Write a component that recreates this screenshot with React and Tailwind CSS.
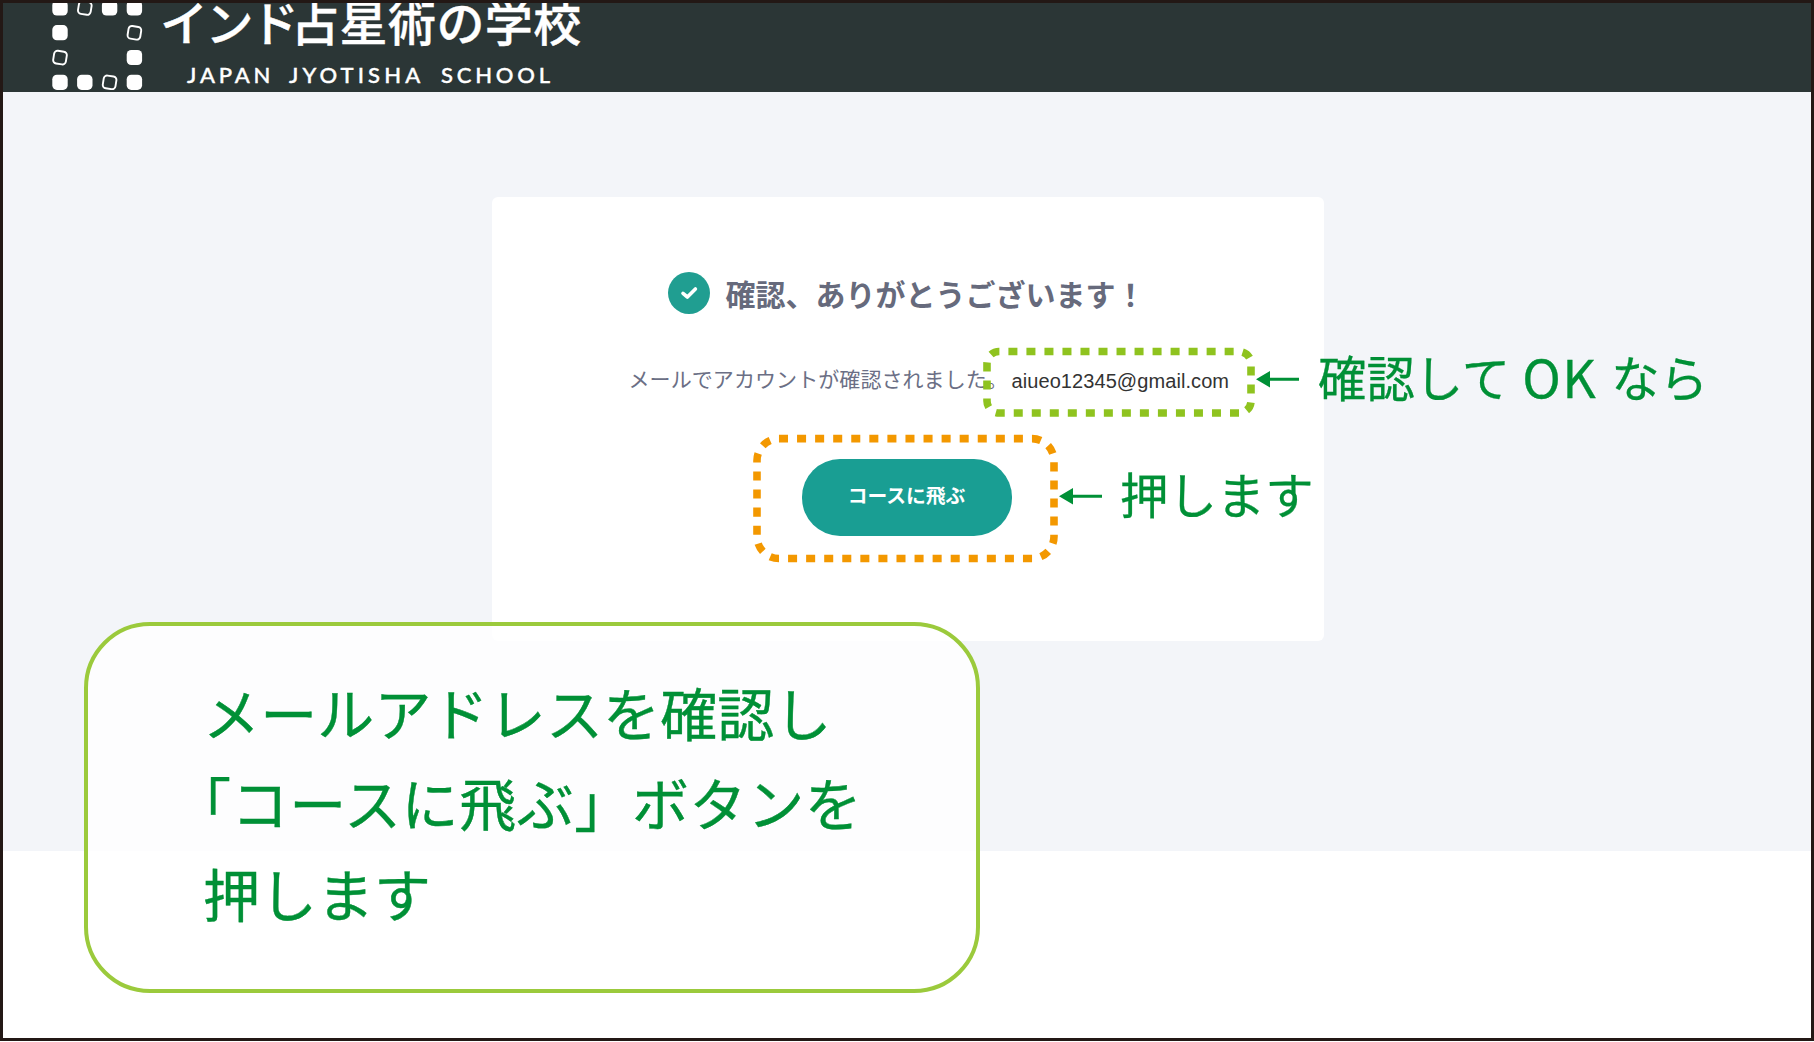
import React from "react";

// 1 = solid tile, 2 = tilted outline tile, 0 = empty
const LOGO = [
  [1, 2, 1, 1],
  [1, 0, 0, 2],
  [2, 0, 0, 1],
  [1, 1, 2, 1],
];

function LogoMark() {
  return (
    <svg className="block shrink-0" width="92" height="90" viewBox="0 0 92 90">
      {LOGO.map((row, r) =>
        row.map((kind, c) => {
          const x = 0.3 + c * 24.8;
          const y = 0.3 + r * 24.8;
          if (kind === 1) {
            return <rect key={`${r}-${c}`} x={x} y={y} width="15.4" height="15.2" rx="4.6" fill="#fff" />;
          }
          if (kind === 2) {
            return (
              <rect
                key={`${r}-${c}`}
                x={x + 1.3}
                y={y + 1.3}
                width="12.8"
                height="12.8"
                rx="3.4"
                fill="none"
                stroke="#fff"
                strokeWidth="1.9"
                transform={`rotate(9 ${x + 7.7} ${y + 7.7})`}
              />
            );
          }
          return null;
        })
      )}
    </svg>
  );
}

function Header() {
  return (
    <header className="flex h-[92px] items-start bg-[#2b3636] pl-[52px] text-white">
      <LogoMark />
      <div className="ml-[16px]">
        <div className="mt-[-5px] flex h-[50px] items-center text-[48px] leading-none font-medium whitespace-nowrap [-webkit-text-stroke:0.4px_#fff]">
          <span className="tracking-[-2.6px]">インド</span>
          <span className="ml-[-5px] tracking-[0.4px]">占星術の学校</span>
        </div>
        <div className="mt-[17px] ml-[27px] flex font-['Lato'] text-[22px] leading-[26px] font-medium whitespace-nowrap [-webkit-text-stroke:0.4px_#fff]">
          <span className="w-[102px] tracking-[3.8px]">JAPAN</span>
          <span className="w-[152px] tracking-[4.1px]">JYOTISHA</span>
          <span className="tracking-[3.8px]">SCHOOL</span>
        </div>
      </div>
    </header>
  );
}

function Card() {
  return (
    <div className="ml-px flex h-[444px] w-[832px] flex-col items-center rounded-md bg-white pt-[75px]">
      <div className="flex h-[42px] w-full items-center pl-[176px]">
        <span className="flex size-[42px] items-center justify-center rounded-full bg-[#209e91]">
          <svg width="18" height="16" viewBox="0 0 18 16" fill="none" stroke="#fff" strokeWidth="3.6">
            <path d="M3 8.4L7.4 12L15.4 4" strokeLinecap="round" strokeLinejoin="round" />
          </svg>
        </span>
        <h1 className="ml-[16px] -mt-px text-[30px] leading-none font-bold whitespace-nowrap text-[#666a7c]">
          確認、ありがとうございます！
        </h1>
      </div>
      <div className="mt-[49px] flex h-[34px] w-full items-center pl-[137px] whitespace-nowrap">
        <p className="-mt-[3px] w-[378px] text-[21px] leading-none tracking-[0.08px] text-[#6b6f85]">
          メールでアカウントが確認されました。
        </p>
        <span className="mt-[2px] ml-[5px] font-['Liberation_Sans'] text-[20px] tracking-[0.08px] text-[#333]">
          aiueo12345@gmail.com
        </span>
      </div>
      <button className="mt-[62px] mr-[2px] h-[77px] w-[210px] rounded-[38px] bg-[#199e93] pb-1.5 text-[19.8px] font-bold text-white">
        コースに飛ぶ
      </button>
    </div>
  );
}

// Dashed rounded outlines and the arrows that point at them.
function Marks() {
  return (
    <svg className="pointer-events-none absolute top-0 left-0" width="1814" height="1042" fill="none">
      <path
        d="M1239 413H999A12 12 0 0 1 987 401V363.5A12 12 0 0 1 999 351.5H1239A12 12 0 0 1 1251 363.5V401A12 12 0 0 1 1239 413"
        stroke="#8fc31f"
        strokeWidth="7.6"
        strokeDasharray="9.01"
      />
      <path
        d="M1032 558.5H779A22 22 0 0 1 757 536.5V460.6A22 22 0 0 1 779 438.6H1032A22 22 0 0 1 1054 460.6V536.5A22 22 0 0 1 1032 558.5"
        stroke="#f39800"
        strokeWidth="7.6"
        strokeDasharray="9.035"
      />
      <g fill="#009036">
        <path d="M1256 379.2l14-8.2v6.7h29v3h-29v6.7z" />
        <path d="M1059 496.2l14-8.2v6.7h29v3h-29v6.7z" />
      </g>
    </svg>
  );
}

export default function App() {
  return (
    <div className="relative h-[1042px] w-[1814px] overflow-hidden bg-white font-['Noto_Sans_CJK_JP',sans-serif]">
      <Header />
      <main className="flex h-[759px] items-start justify-center bg-[#f3f5f9] pt-[105px]">
        <Card />
      </main>

      <div className="absolute top-[622px] left-[84px] h-[371px] w-[896px] rounded-[66px] border-4 border-[#9bca3c] bg-white/80 pt-[40px] pl-[115px] text-[57px] leading-[90.4px] whitespace-nowrap text-[#009036] [-webkit-text-stroke:0.4px_#009036]">
        <p className="tracking-[0.15px]">メールアドレスを確認し</p>
        <p className="ml-[-29px] tracking-[0.6px]">「コースに飛ぶ」ボタンを</p>
        <p>押します</p>
      </div>

      <Marks />
      <div className="absolute top-[346px] left-[1318px] flex h-[60px] items-center text-[48.4px] leading-none whitespace-nowrap text-[#009036] [-webkit-text-stroke:0.3px_#009036]">
        <span>確認して</span>
        <span className="ml-[12px] w-[89px] text-[52px] tracking-[1.5px]">OK</span>
        <span className="tracking-[0.2px]">なら</span>
      </div>
      <div className="absolute top-[463px] left-[1120px] flex h-[60px] items-center text-[48.4px] leading-none whitespace-nowrap text-[#009036] [-webkit-text-stroke:0.3px_#009036]">
        押します
      </div>

      <div className="pointer-events-none absolute top-0 left-0 h-[1041px] w-[1814px] border-[3px] border-[#231815]" />
    </div>
  );
}
